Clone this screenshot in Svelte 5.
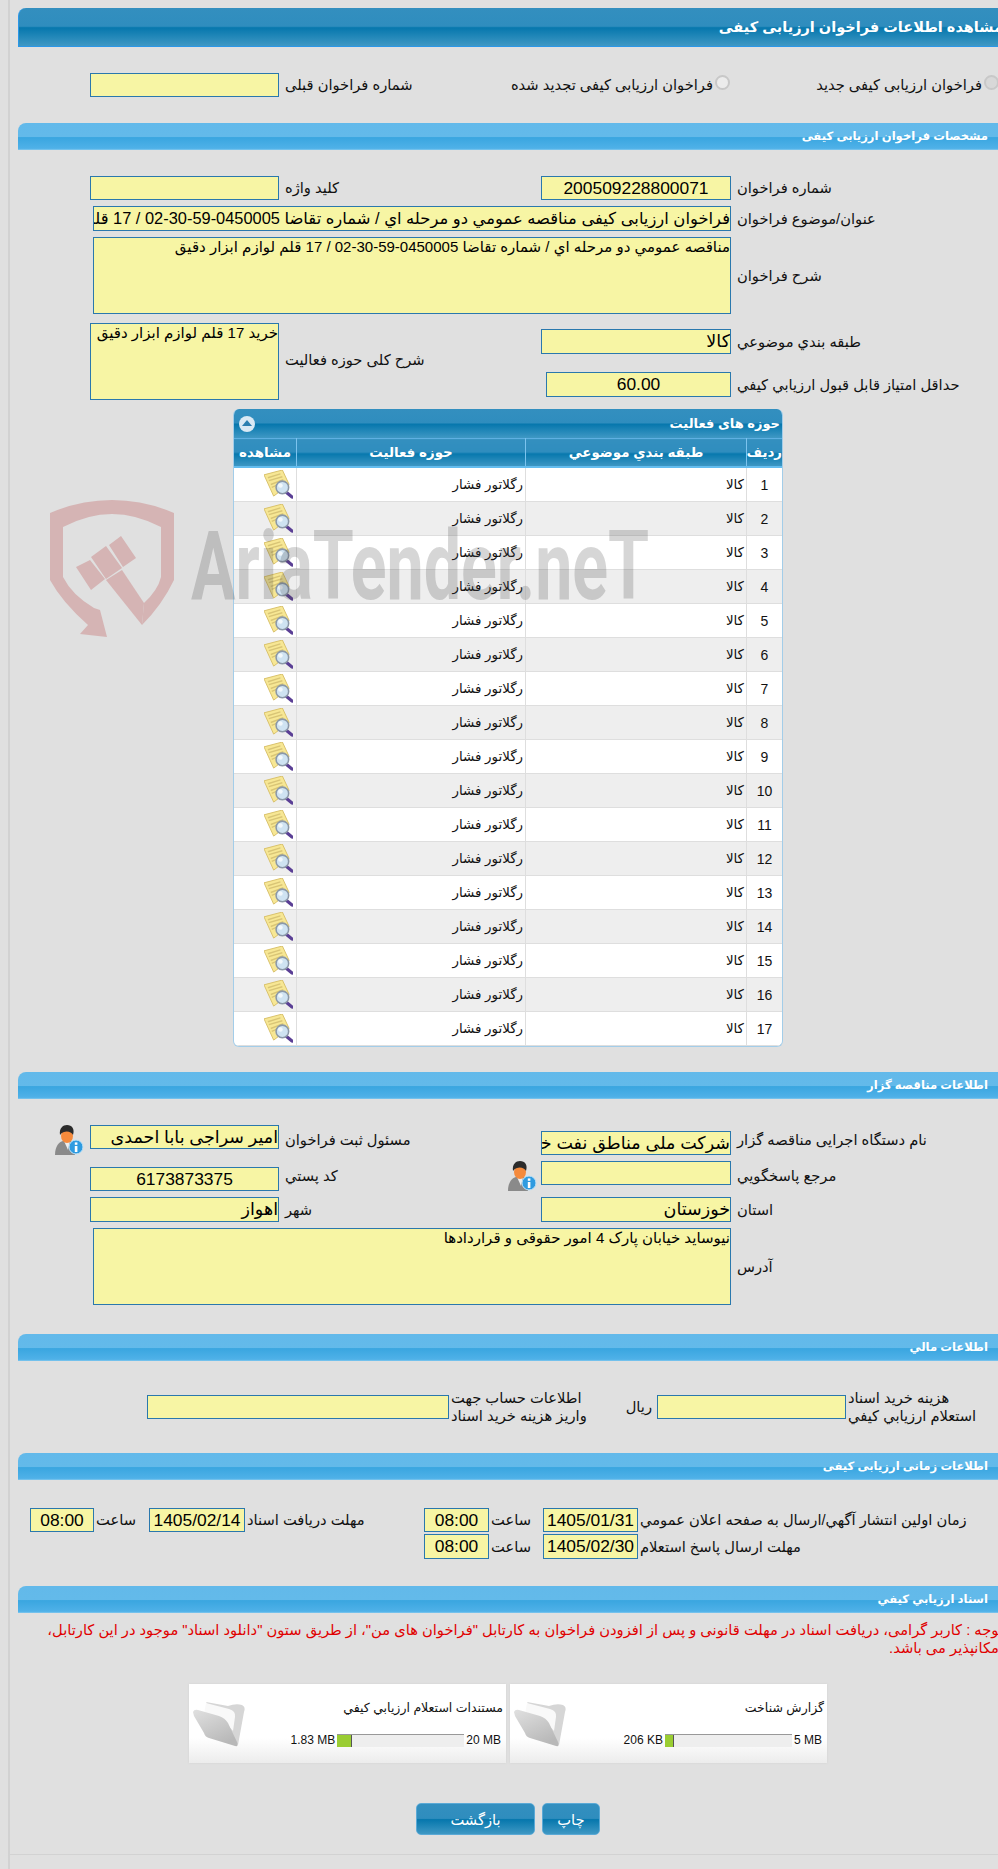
<script>
  const rows = Array.from({ length: 17 }, (_, i) => i + 1);
  const docs = [
    { title: 'گزارش شناخت', used: '206 KB', max: '5 MB', pct: 6 },
    { title: 'مستندات استعلام ارزيابي كيفي', used: '1.83 MB', max: '20 MB', pct: 11 }
  ];
</script>

{#snippet docIcon()}
  <svg class="doc" viewBox="0 0 30 30" width="29" height="29">
    <path d="M0 5 19 0 26 15 10 27Z" fill="#f7e794" stroke="#d8c06a" />
    <path d="M4 8 17 4M5 11 19 7M7 15 20 10M8 18 15 15" stroke="#d9c576" stroke-width="1.4" fill="none" />
    <path d="M23 23 29 28" stroke="#5b3f95" stroke-width="3.4" stroke-linecap="round" />
    <circle cx="19" cy="18" r="6.5" fill="#cfe3f2" stroke="#8b98a8" stroke-width="1.6" />
    <circle cx="17" cy="16" r="2.4" fill="#f2f8fc" />
  </svg>
{/snippet}

{#snippet userIcon()}
  <svg class="user" viewBox="0 0 30 30" width="30" height="30">
    <path d="M1 30C1 21 5 17 9 16H17C20 17 21 20 21 30Z" fill="#8a8a8a" />
    <path d="M10 16H16L14 25Z" fill="#eee" />
    <ellipse cx="13" cy="11" rx="6" ry="7" fill="#f58a3c" />
    <path d="M6 10C5 3 9 0 13 0 18 0 21 4 19 10 17 6 10 5 6 10Z" fill="#2b2b2b" />
    <circle cx="22" cy="22" r="7" fill="#2f9be0" stroke="#bfe2f7" />
    <rect x="20.8" y="21" width="2.6" height="6" fill="#fff" />
    <rect x="20.8" y="17.4" width="2.6" height="2.4" fill="#fff" />
  </svg>
{/snippet}

{#snippet folderIcon()}
  <svg class="folder" viewBox="0 0 54 46" width="54" height="46">
    <defs>
      <linearGradient id="fold" x1="0" y1="0" x2="0.6" y2="1">
        <stop offset="0" stop-color="#e0e0e0" />
        <stop offset="1" stop-color="#b8b8b8" />
      </linearGradient>
    </defs>
    <path d="M14 1 36 5Q44 2 50 4 54 6 52 11L46 44 36 30Z" fill="#d6d6d6" />
    <path d="M14 2 37 8Q44 10 43 16L41 30 32 20 12 13Z" fill="#f9f9f9" />
    <path d="M1 11Q2 8 6 9L27 15Q33 17 36 22L45 41Q47 46 43 45L17 37Q13 36 12 32L2 15Z" fill="url(#fold)" />
  </svg>
{/snippet}

<div class="frame">
  <div class="page">
    <div class="bar main">مشاهده اطلاعات فراخوان ارزیابی کیفی</div>

    <div class="radios">
      <label class="radio"><input type="radio" name="kind" checked disabled />فراخوان ارزیابی کیفی جدید</label>
      <label class="radio"><input type="radio" name="kind" disabled />فراخوان ارزیابی کیفی تجدید شده</label>
      <span class="lab">شماره فراخوان قبلی</span>
      <input class="in" readonly />
    </div>

    <div class="bar sec">مشخصات فراخوان ارزیابی کیفی</div>
    <div class="form spec">
      <span class="lab first">شماره فراخوان</span>
      <input class="in num" readonly value="200509228800071" />
      <span class="lab">کلید واژه</span>
      <input class="in" readonly />

      <span class="lab first">عنوان/موضوع فراخوان</span>
      <input class="in wide h25 subject" readonly value="فراخوان ارزیابی کیفی مناقصه عمومي دو مرحله اي / شماره تقاضا 0450005-59-30-02 / 17 قلم لوازم ابزار دقيق" />

      <span class="lab first">شرح فراخوان</span>
      <textarea class="ta wide" readonly>مناقصه عمومي دو مرحله اي / شماره تقاضا 0450005-59-30-02 / 17 قلم لوازم ابزار دقيق</textarea>

      <span class="lab first">طبقه بندي موضوعي</span>
      <input class="in h25" readonly value="کالا" />
      <span class="lab span2">شرح کلی حوزه فعالیت</span>
      <textarea class="ta small" readonly>خرید 17 قلم لوازم ابزار دقیق</textarea>

      <span class="lab first">حداقل امتياز قابل قبول ارزيابي كيفي</span>
      <input class="in num h25 short" readonly value="60.00" />
    </div>

    <div class="panel">
      <div class="ptitle">
        <span>حوزه های فعالیت</span>
        <span class="toggle"></span>
      </div>
      <table>
        <thead>
          <tr>
            <th class="c1">رديف</th>
            <th class="c2">طبقه بندي موضوعي</th>
            <th class="c3">حوزه فعاليت</th>
            <th class="c4">مشاهده</th>
          </tr>
        </thead>
        <tbody>
          {#each rows as n}
            <tr>
              <td class="c1 n">{n}</td>
              <td class="c2">کالا</td>
              <td class="c3">رگلاتور فشار</td>
              <td class="c4">{@render docIcon()}</td>
            </tr>
          {/each}
        </tbody>
      </table>
    </div>

    <div class="bar sec">اطلاعات مناقصه گزار</div>
    <div class="form org">
      <span class="lab first">نام دستگاه اجرایی مناقصه گزار</span>
      <input class="in end" readonly value="شرکت ملی مناطق نفت خیز جنوب" />
      <span class="lab">مسئول ثبت فراخوان</span>
      <input class="in start" readonly value="امیر سراجی بابا احمدی" />
      {@render userIcon()}

      <span class="lab first">مرجع پاسخگويي</span>
      <input class="in start" readonly />
      <span class="lab withicon">{@render userIcon()}<span>کد پستي</span></span>
      <input class="in num end" readonly value="6173873375" />

      <span class="lab first">استان</span>
      <input class="in h25" readonly value="خوزستان" />
      <span class="lab">شهر</span>
      <input class="in h25" readonly value="اهواز" />

      <span class="lab first">آدرس</span>
      <textarea class="ta wide" readonly>نیوساید خیابان پارک 4 امور حقوقی و قراردادها</textarea>
    </div>

    <div class="bar sec">اطلاعات مالي</div>
    <div class="money">
      <span class="lab">هزينه خريد اسناد<br />استعلام ارزيابي كيفي</span>
      <input class="in" readonly />
      <span class="lab rial">ريال</span>
      <span class="lab">اطلاعات حساب جهت<br />واريز هزينه خريد اسناد</span>
      <input class="in" readonly />
    </div>

    <div class="bar sec">اطلاعات زمانی ارزیابی کیفی</div>
    <div class="times">
      <span class="lab">زمان اولين انتشار آگهي/ارسال به صفحه اعلان عمومي</span>
      <input class="in num" readonly value="1405/01/31" />
      <span class="lab">ساعت</span>
      <input class="in num" readonly value="08:00" />
      <span class="lab">مهلت دریافت اسناد</span>
      <input class="in num" readonly value="1405/02/14" />
      <span class="lab">ساعت</span>
      <input class="in num" readonly value="08:00" />

      <span class="lab">مهلت ارسال پاسخ استعلام</span>
      <input class="in num h25" readonly value="1405/02/30" />
      <span class="lab">ساعت</span>
      <input class="in num h25" readonly value="08:00" />
    </div>

    <div class="bar sec docsbar">اسناد ارزيابي كيفي</div>
    <p class="note">توجه : کاربر گرامی، دریافت اسناد در مهلت قانونی و پس از افزودن فراخوان به کارتابل "فراخوان های من"، از طریق ستون "دانلود اسناد" موجود در این کارتابل،<br />امکانپذیر می باشد.</p>

    <div class="cards">
      {#each docs as d}
        <div class="card">
          <div class="ctext">
            <div class="ctitle">{d.title}</div>
            <div class="meter">
              <span class="mval">{d.max}</span>
              <span class="track"><span class="fill" style="width: {d.pct}%"></span></span>
              <span class="mval">{d.used}</span>
            </div>
          </div>
          {@render folderIcon()}
        </div>
      {/each}
    </div>

    <div class="buttons">
      <button class="print">چاپ</button>
      <button class="back">بازگشت</button>
    </div>

    <div class="foot"></div>

    <div class="mark" aria-hidden="true">
      <svg class="shield" viewBox="0 0 126 140" width="126" height="140">
        <path d="M0 13Q30 0 62 0 94 0 124 13V80Q112 105 92 125L94 103Q108 90 111 77V27Q86 14 62 14 38 14 13 27V77Q22 95 44 108L50 110 57 137 30 134 38 125Q12 102 0 80Z" />
        <path d="M26 67 40 60 55 79 41 90ZM41 57 56 46 72 68 56 79ZM59 45 71 36 86 58 73 67Z" />
        <path d="M72 70 94 103 92 125 56 80Z" />
      </svg>
      <span class="wm">AriaTender.neT</span>
    </div>
  </div>
</div>

<style>
  :global(body) {
    margin: 0;
    background: #e0e0e0;
    overflow-x: hidden;
  }

  .frame {
    width: 998px;
    height: 1869px;
    overflow: hidden;
  }

  .page {
    --ar: "Liberation Sans", "DejaVu Sans", sans-serif;
    position: relative;
    box-sizing: border-box;
    width: 995px;
    height: 1869px;
    margin-left: 8px;
    padding: 8px 0 0 8px;
    border-left: 2px solid #d2d2d2;
    direction: rtl;
    font-family: var(--ar);
    font-size: 14.7px;
    color: #111;
  }

  /* header bars */
  .bar {
    color: #fff;
    white-space: nowrap;
    border-radius: 8px 0 0 0;
  }

  .main {
    box-sizing: border-box;
    height: 39px;
    line-height: 38px;
    font-size: 14.5px;
    font-weight: bold;
    border-left: 1px solid #2b97e8;
    border-bottom: 1px solid #2b97e8;
    background: linear-gradient(#338fbf 0, #2f8dbe 48%, #0677ad 52%, #3f98c4 100%);
  }

  .sec {
    height: 27px;
    line-height: 26px;
    padding-right: 15px;
    font-size: 11.6px;
    font-weight: bold;
    background: linear-gradient(#62b9ea 0, #63baea 50%, #3aa6e0 54%, #4fb1e8 94%, #83c8ee 100%);
  }

  /* fields */
  .lab {
    align-self: center;
    text-align: left;
    white-space: nowrap;
    line-height: 18px;
  }

  .first {
    grid-column: 1;
  }

  .in,
  .ta {
    box-sizing: border-box;
    margin: 0;
    padding: 0;
    border: 1px solid #2a78ad;
    border-radius: 0;
    background: #f7f5a4;
    color: #000;
    outline: none;
    direction: rtl;
    font-family: var(--ar);
  }

  .in {
    width: 100%;
    height: 24px;
    font-size: 17.5px;
    align-self: center;
  }

  .subject {
    font-size: 16.4px;
  }

  .num {
    text-align: center;
    font-size: 17.4px;
  }

  .h25 {
    height: 25px;
  }

  .ta {
    height: 77px;
    resize: none;
    overflow: hidden;
    font-size: 15px;
    line-height: 18px;
  }

  .wide {
    grid-column: 2 / 5;
    width: 638px;
    justify-self: start;
  }

  .radios {
    display: grid;
    grid-template-columns: 269px 316px 129px 189px;
    margin: 26px 4px 26px 0;
    height: 24px;
    align-items: center;
  }

  .radios .in {
    margin-right: 6px;
    width: 189px;
  }

  .radio {
    display: flex;
    align-items: center;
    gap: 2px;
    white-space: nowrap;
    line-height: 18px;
  }

  .radio input {
    appearance: none;
    box-sizing: border-box;
    width: 15px;
    height: 15px;
    margin: -6px 0 0 0;
    flex: none;
    border: 2px solid #c8c8c8;
    border-radius: 50%;
    background: #ececec;
  }

  .radio input:checked {
    background: #d8d8d8;
  }

  .form {
    display: grid;
    grid-template-columns: 266px 190px 250px 189px 28px;
    column-gap: 6px;
    row-gap: 6px;
    justify-content: start;
    margin: 26px 0;
  }

  .spec {
    grid-template-rows: 24px 25px 77px 43px 31px;
    margin-bottom: 9px;
  }

  .span2 {
    grid-row: 4 / 6;
    grid-column: 3;
  }

  .small {
    grid-row: 4 / 6;
    grid-column: 4;
    align-self: end;
    width: 189px;
  }

  .short {
    width: 185px;
    justify-self: start;
  }

  .org {
    grid-template-rows: 30px 30px 25px 77px;
    margin-bottom: 29px;
  }

  .start {
    align-self: start;
  }

  .end {
    align-self: end;
  }

  .withicon {
    display: flex;
    justify-content: space-between;
    align-items: center;
  }

  .withicon .user {
    margin-right: -2px;
  }

  /* table */
  .panel {
    box-sizing: border-box;
    width: 550px;
    margin: 0 220px 25px 0;
    border-radius: 6px;
    overflow: hidden;
    border: 1px solid #a3cde9;
    border-top: 0;
    background: #fff;
  }

  .ptitle {
    display: flex;
    justify-content: space-between;
    align-items: center;
    height: 29px;
    padding: 0 2px 0 5px;
    color: #fff;
    font-size: 13px;
    font-weight: bold;
    background: linear-gradient(#338fbf 0, #2f8dbe 48%, #0677ad 52%, #3f98c4 100%);
  }

  .toggle {
    position: relative;
    width: 16px;
    height: 16px;
    border-radius: 50%;
    background: #d9e9f4;
  }

  .toggle::after {
    content: "";
    position: absolute;
    left: 3px;
    top: 4px;
    border: 5px solid transparent;
    border-top: 0;
    border-bottom: 6px solid #2b7fb0;
  }

  table {
    width: 100%;
    table-layout: fixed;
    border-collapse: collapse;
  }

  th {
    height: 27px;
    padding: 0;
    color: #fff;
    font-size: 13.4px;
    text-align: center;
    border-left: 1px solid #7cc3ee;
    border-top: 1px solid #5eb0e2;
    border-bottom: 2px solid #63bcee;
    background: linear-gradient(#338fbf 0, #2f8dbe 48%, #0677ad 52%, #3f98c4 100%);
  }

  td {
    height: 33px;
    padding: 0 2px;
    font-size: 13.4px;
    border-left: 1px solid #dedede;
    border-bottom: 1px solid #dedede;
  }

  tbody tr:nth-child(even) td {
    background: #eeeeee;
  }

  th:last-child,
  td:last-child {
    border-left: 0;
  }

  .c1 {
    width: 35px;
  }

  .c2 {
    width: 220px;
  }

  .c3 {
    width: 228px;
  }

  td.n {
    text-align: center;
    font-size: 14px;
  }

  td.c4 {
    padding: 0;
  }

  td svg {
    display: block;
    margin: 0 3px 0 auto;
  }

  /* money */
  .money {
    display: grid;
    grid-template-columns: 155px 189px 64px 138px 302px;
    grid-template-rows: 24px;
    column-gap: 2px;
    justify-content: start;
    margin: 34px 0;
    align-items: center;
  }

  .rial {
    padding-right: 3px;
    text-align: right;
  }

  .times {
    display: grid;
    grid-template-columns: 363px 95px 50px 65px 175px 96px 51px 64px;
    grid-template-rows: 24px 25px;
    gap: 2px;
    justify-content: start;
    margin: 28px 0 27px;
  }

  .note {
    margin: 8px 0 27px;
    color: #e00000;
    line-height: 18px;
    white-space: nowrap;
  }

  /* documents */
  .cards {
    display: flex;
    gap: 4px;
    margin: 0 176px 40px 0;
  }

  .card {
    display: flex;
    justify-content: space-between;
    align-items: center;
    box-sizing: border-box;
    width: 317px;
    height: 79px;
    padding: 0 3px;
    background: linear-gradient(#fff 0, #fff 68%, #ececec 100%);
    box-shadow: 0 0 2px #cfcfcf;
  }

  .ctext {
    align-self: flex-start;
    flex: 1;
    padding-top: 14px;
  }

  .ctitle {
    height: 35px;
    line-height: 20px;
    font-size: 12.5px;
  }

  .meter {
    display: flex;
    align-items: center;
    gap: 2px;
    padding-right: 2px;
    font-size: 12px;
    white-space: nowrap;
  }

  .mval {
    direction: ltr;
    unicode-bidi: isolate;
  }

  .track {
    position: relative;
    width: 127px;
    height: 13px;
    background: #eeeeee;
    border-top: 1px solid #999;
    box-sizing: border-box;
  }

  .fill {
    position: absolute;
    left: 0;
    top: 0;
    bottom: 0;
    background: #9acd32;
    border-right: 1px solid #555;
  }

  .folder {
    flex: none;
  }

  /* buttons */
  .buttons {
    display: flex;
    gap: 7px;
    margin: 0 403px 19px 0;
  }

  button {
    height: 32px;
    padding: 0;
    border: 1px solid #5aa9d6;
    border-radius: 5px;
    color: #fff;
    font-family: var(--ar);
    font-size: 14.7px;
    background: linear-gradient(#338fbf 0, #2f8dbe 48%, #0677ad 52%, #3f98c4 100%);
  }

  .print {
    width: 58px;
  }

  .back {
    width: 119px;
  }

  .foot {
    height: 1px;
    background: #d2d2d2;
    margin-left: -8px;
  }

  /* site watermark across the page */
  .mark {
    position: absolute;
    left: 40px;
    top: 500px;
    pointer-events: none;
    direction: ltr;
  }

  .shield {
    display: block;
    fill: #be5050;
    opacity: 0.3;
  }

  .wm {
    position: absolute;
    left: 141px;
    top: 18px;
    font-family: Roboto, sans-serif;
    font-weight: 700;
    font-size: 96px;
    line-height: 96px;
    white-space: nowrap;
    color: rgba(70, 70, 70, 0.22);
    transform-origin: 0 0;
    transform: scaleX(0.69);
  }
</style>
